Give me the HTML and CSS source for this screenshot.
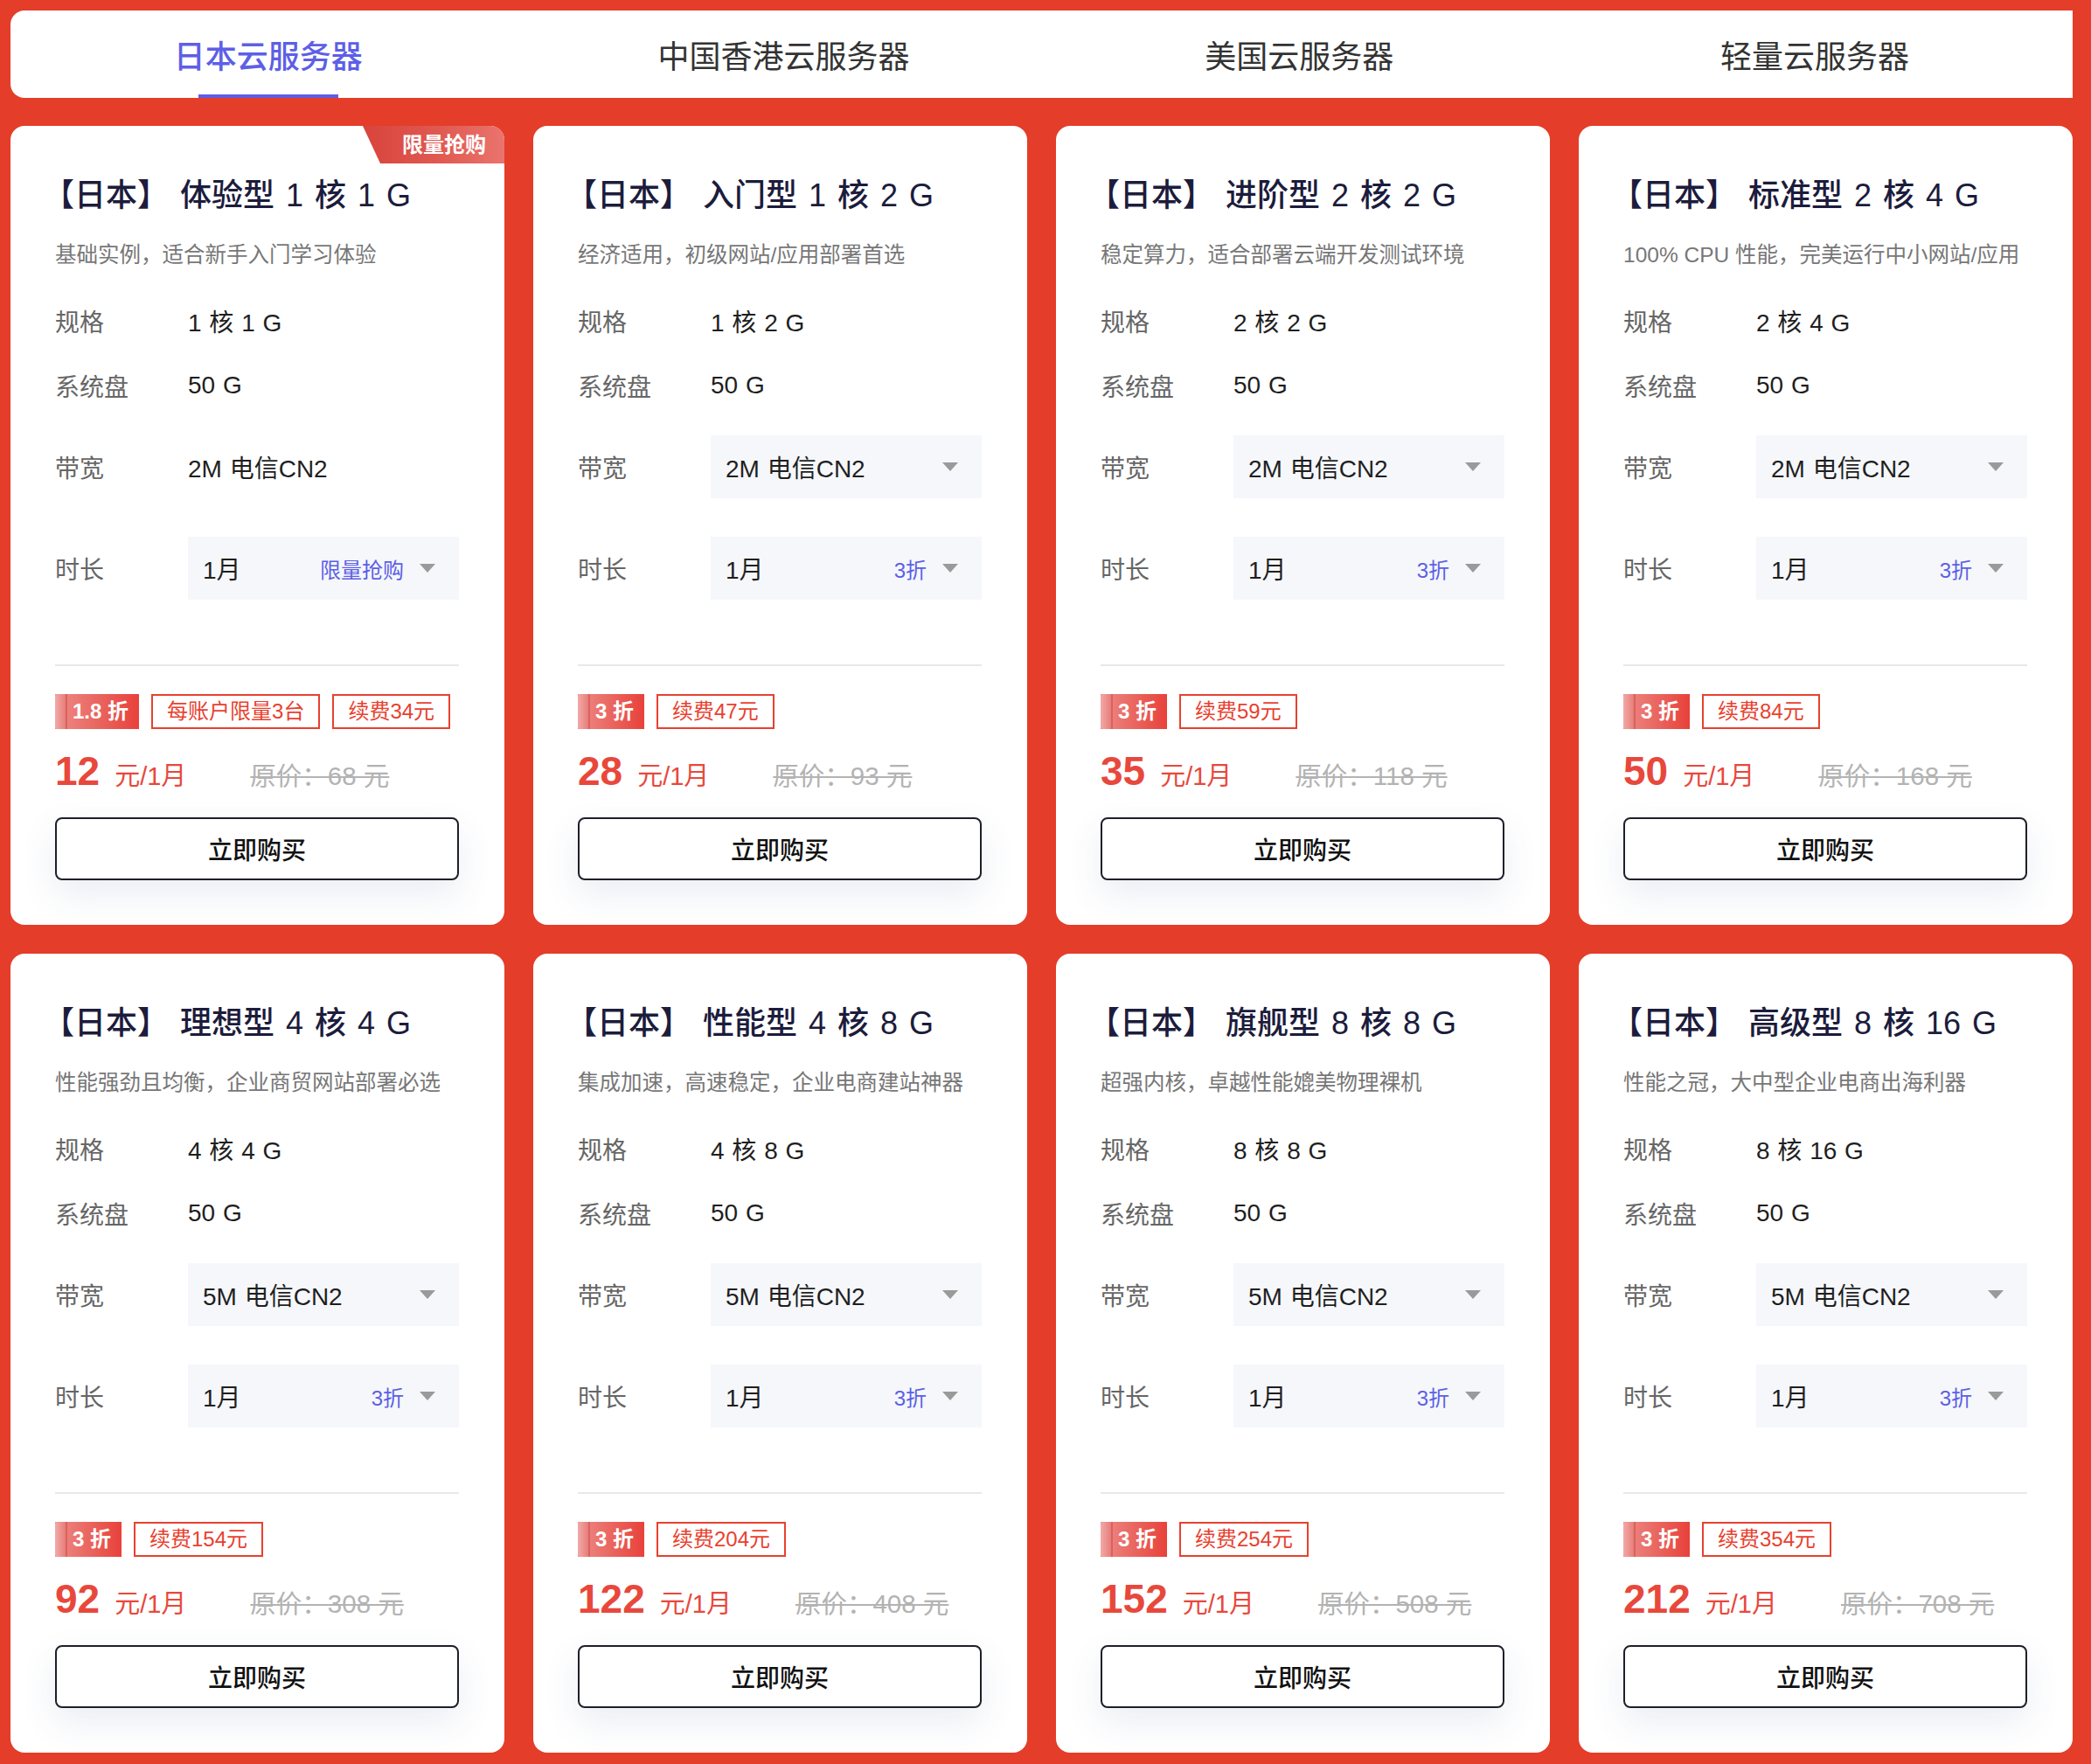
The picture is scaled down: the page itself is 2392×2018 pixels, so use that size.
FILE: index.html
```html
<!DOCTYPE html>
<html lang="zh-CN">
<head>
<meta charset="utf-8">
<title>日本云服务器</title>
<link rel="stylesheet" href="styles.css">
</head>
<body>
<div class="page">
  <nav class="tabs">
    <div class="tab active">日本云服务器</div>
    <div class="tab">中国香港云服务器</div>
    <div class="tab">美国云服务器</div>
    <div class="tab">轻量云服务器</div>
  </nav>

  <div class="grid">
    <!-- card 1 -->
    <div class="card">
      <div class="corner">限量抢购</div>
      <div class="title">【日本】 体验型 1 核 1 G</div>
      <div class="desc">基础实例，适合新手入门学习体验</div>
      <div class="row r-spec"><span class="label">规格</span><span class="value">1 核 1 G</span></div>
      <div class="row r-disk"><span class="label">系统盘</span><span class="value">50 G</span></div>
      <div class="row r-band"><span class="label">带宽</span><span class="value">2M 电信CN2</span></div>
      <div class="row r-time"><span class="label">时长</span><div class="select"><span class="sel-val">1月</span><span class="sel-tip">限量抢购</span><i class="caret"></i></div></div>
      <div class="divider"></div>
      <div class="tags"><span class="disc">1.8 折</span><span class="tag">每账户限量3台</span><span class="tag">续费34元</span></div>
      <div class="price"><span class="num">12</span><span class="unit">元/1月</span><span class="orig">原价：68 元</span></div>
      <button class="buy">立即购买</button>
    </div>

    <!-- card 2 -->
    <div class="card">
      <div class="title">【日本】 入门型 1 核 2 G</div>
      <div class="desc">经济适用，初级网站/应用部署首选</div>
      <div class="row r-spec"><span class="label">规格</span><span class="value">1 核 2 G</span></div>
      <div class="row r-disk"><span class="label">系统盘</span><span class="value">50 G</span></div>
      <div class="row r-band"><span class="label">带宽</span><div class="select"><span class="sel-val">2M 电信CN2</span><i class="caret"></i></div></div>
      <div class="row r-time"><span class="label">时长</span><div class="select"><span class="sel-val">1月</span><span class="sel-tip">3折</span><i class="caret"></i></div></div>
      <div class="divider"></div>
      <div class="tags"><span class="disc">3 折</span><span class="tag">续费47元</span></div>
      <div class="price"><span class="num">28</span><span class="unit">元/1月</span><span class="orig">原价：93 元</span></div>
      <button class="buy">立即购买</button>
    </div>

    <!-- card 3 -->
    <div class="card">
      <div class="title">【日本】 进阶型 2 核 2 G</div>
      <div class="desc">稳定算力，适合部署云端开发测试环境</div>
      <div class="row r-spec"><span class="label">规格</span><span class="value">2 核 2 G</span></div>
      <div class="row r-disk"><span class="label">系统盘</span><span class="value">50 G</span></div>
      <div class="row r-band"><span class="label">带宽</span><div class="select"><span class="sel-val">2M 电信CN2</span><i class="caret"></i></div></div>
      <div class="row r-time"><span class="label">时长</span><div class="select"><span class="sel-val">1月</span><span class="sel-tip">3折</span><i class="caret"></i></div></div>
      <div class="divider"></div>
      <div class="tags"><span class="disc">3 折</span><span class="tag">续费59元</span></div>
      <div class="price"><span class="num">35</span><span class="unit">元/1月</span><span class="orig">原价：118 元</span></div>
      <button class="buy">立即购买</button>
    </div>

    <!-- card 4 -->
    <div class="card">
      <div class="title">【日本】 标准型 2 核 4 G</div>
      <div class="desc">100% CPU 性能，完美运行中小网站/应用</div>
      <div class="row r-spec"><span class="label">规格</span><span class="value">2 核 4 G</span></div>
      <div class="row r-disk"><span class="label">系统盘</span><span class="value">50 G</span></div>
      <div class="row r-band"><span class="label">带宽</span><div class="select"><span class="sel-val">2M 电信CN2</span><i class="caret"></i></div></div>
      <div class="row r-time"><span class="label">时长</span><div class="select"><span class="sel-val">1月</span><span class="sel-tip">3折</span><i class="caret"></i></div></div>
      <div class="divider"></div>
      <div class="tags"><span class="disc">3 折</span><span class="tag">续费84元</span></div>
      <div class="price"><span class="num">50</span><span class="unit">元/1月</span><span class="orig">原价：168 元</span></div>
      <button class="buy">立即购买</button>
    </div>

    <!-- card 5 -->
    <div class="card">
      <div class="title">【日本】 理想型 4 核 4 G</div>
      <div class="desc">性能强劲且均衡，企业商贸网站部署必选</div>
      <div class="row r-spec"><span class="label">规格</span><span class="value">4 核 4 G</span></div>
      <div class="row r-disk"><span class="label">系统盘</span><span class="value">50 G</span></div>
      <div class="row r-band"><span class="label">带宽</span><div class="select"><span class="sel-val">5M 电信CN2</span><i class="caret"></i></div></div>
      <div class="row r-time"><span class="label">时长</span><div class="select"><span class="sel-val">1月</span><span class="sel-tip">3折</span><i class="caret"></i></div></div>
      <div class="divider"></div>
      <div class="tags"><span class="disc">3 折</span><span class="tag">续费154元</span></div>
      <div class="price"><span class="num">92</span><span class="unit">元/1月</span><span class="orig">原价：308 元</span></div>
      <button class="buy">立即购买</button>
    </div>

    <!-- card 6 -->
    <div class="card">
      <div class="title">【日本】 性能型 4 核 8 G</div>
      <div class="desc">集成加速，高速稳定，企业电商建站神器</div>
      <div class="row r-spec"><span class="label">规格</span><span class="value">4 核 8 G</span></div>
      <div class="row r-disk"><span class="label">系统盘</span><span class="value">50 G</span></div>
      <div class="row r-band"><span class="label">带宽</span><div class="select"><span class="sel-val">5M 电信CN2</span><i class="caret"></i></div></div>
      <div class="row r-time"><span class="label">时长</span><div class="select"><span class="sel-val">1月</span><span class="sel-tip">3折</span><i class="caret"></i></div></div>
      <div class="divider"></div>
      <div class="tags"><span class="disc">3 折</span><span class="tag">续费204元</span></div>
      <div class="price"><span class="num">122</span><span class="unit">元/1月</span><span class="orig">原价：408 元</span></div>
      <button class="buy">立即购买</button>
    </div>

    <!-- card 7 -->
    <div class="card">
      <div class="title">【日本】 旗舰型 8 核 8 G</div>
      <div class="desc">超强内核，卓越性能媲美物理裸机</div>
      <div class="row r-spec"><span class="label">规格</span><span class="value">8 核 8 G</span></div>
      <div class="row r-disk"><span class="label">系统盘</span><span class="value">50 G</span></div>
      <div class="row r-band"><span class="label">带宽</span><div class="select"><span class="sel-val">5M 电信CN2</span><i class="caret"></i></div></div>
      <div class="row r-time"><span class="label">时长</span><div class="select"><span class="sel-val">1月</span><span class="sel-tip">3折</span><i class="caret"></i></div></div>
      <div class="divider"></div>
      <div class="tags"><span class="disc">3 折</span><span class="tag">续费254元</span></div>
      <div class="price"><span class="num">152</span><span class="unit">元/1月</span><span class="orig">原价：508 元</span></div>
      <button class="buy">立即购买</button>
    </div>

    <!-- card 8 -->
    <div class="card">
      <div class="title">【日本】 高级型 8 核 16 G</div>
      <div class="desc">性能之冠，大中型企业电商出海利器</div>
      <div class="row r-spec"><span class="label">规格</span><span class="value">8 核 16 G</span></div>
      <div class="row r-disk"><span class="label">系统盘</span><span class="value">50 G</span></div>
      <div class="row r-band"><span class="label">带宽</span><div class="select"><span class="sel-val">5M 电信CN2</span><i class="caret"></i></div></div>
      <div class="row r-time"><span class="label">时长</span><div class="select"><span class="sel-val">1月</span><span class="sel-tip">3折</span><i class="caret"></i></div></div>
      <div class="divider"></div>
      <div class="tags"><span class="disc">3 折</span><span class="tag">续费354元</span></div>
      <div class="price"><span class="num">212</span><span class="unit">元/1月</span><span class="orig">原价：708 元</span></div>
      <button class="buy">立即购买</button>
    </div>
  </div>
</div>
</body>
</html>
```

FILE: styles.css
```css
* { box-sizing: border-box; }

html, body {
  margin: 0;
  padding: 0;
  background: #e43d29;
}

body {
  font-family: "Liberation Sans", "Noto Sans CJK SC", sans-serif;
  color: #1f1f1f;
}

.page {
  padding: 12px 21px 13px 12px;
}

/* ---------- tabs ---------- */
.tabs {
  display: grid;
  grid-template-columns: repeat(4, 1fr);
  height: 100px;
  background: #fff;
  border-radius: 16px 0 0 16px;
  margin-bottom: 32px;
}

.tab {
  position: relative;
  display: flex;
  align-items: center;
  justify-content: center;
  font-size: 36px;
  color: #333;
}

.tab.active {
  color: #5d5fe6;
  font-weight: 500;
}

.tab.active::after {
  content: "";
  position: absolute;
  bottom: 0;
  left: 50%;
  width: 160px;
  height: 4px;
  margin-left: -80px;
  background: #5d5fe6;
}

/* ---------- grid ---------- */
.grid {
  display: grid;
  grid-template-columns: repeat(4, 565px);
  gap: 33px;
}

.card {
  position: relative;
  overflow: hidden;
  background: #fff;
  border-radius: 16px;
  padding: 55px 52px 51px 51px;
  display: flex;
  flex-direction: column;
}

.corner {
  position: absolute;
  top: 0;
  right: 0;
  width: 162px;
  height: 43px;
  padding-left: 45px;
  line-height: 43px;
  font-size: 24px;
  font-weight: 700;
  color: #fff;
  background: linear-gradient(90deg, #d8443c 0%, #e05a52 55%, #ea746e 100%);
  clip-path: polygon(0 0, 100% 0, 100% 100%, 20px 100%);
}

.title {
  height: 50px;
  line-height: 50px;
  font-size: 36px;
  font-weight: 500;
  color: #1c1c3c;
  margin-left: -14px;
  word-spacing: 3px;
  white-space: nowrap;
}

.desc {
  margin-top: 26px;
  height: 34px;
  line-height: 34px;
  font-size: 24.5px;
  color: #777;
  white-space: nowrap;
}

.row {
  display: flex;
  align-items: center;
  font-size: 28px;
}

.label {
  width: 152px;
  flex: none;
  color: #666;
}

.value {
  color: #1f1f1f;
  word-spacing: 1px;
}

.r-spec { margin-top: 38px; height: 40px; }
.r-disk { margin-top: 34px; height: 40px; }
.r-band { margin-top: 37px; height: 72px; }
.r-time { margin-top: 44px; height: 72px; }

.select {
  flex: 1;
  height: 72px;
  display: flex;
  align-items: center;
  padding: 0 27px 0 17px;
  background: #f5f7fb;
}

.sel-val {
  color: #1f1f1f;
  font-size: 28px;
  word-spacing: 1px;
}

.sel-tip {
  margin-left: auto;
  font-size: 24px;
  color: #5d5fe6;
}

.caret {
  width: 0;
  height: 0;
  margin-left: 18px;
  border-left: 9px solid transparent;
  border-right: 9px solid transparent;
  border-top: 10px solid #9a9a9a;
}

.select .sel-val + .caret { margin-left: auto; }

.divider {
  margin-top: 74px;
  height: 2px;
  background: #e8e8e8;
}

/* ---------- tags ---------- */
.tags {
  margin-top: 32px;
  height: 40px;
  display: flex;
  gap: 14px;
}

.disc {
  position: relative;
  height: 40px;
  line-height: 40px;
  padding: 0 12px 0 20px;
  font-size: 24px;
  font-weight: 700;
  color: #fff;
  background: linear-gradient(90deg, #ee8b88 0%, #ea6a64 45%, #e8413a 100%);
}

.disc::before {
  content: "";
  position: absolute;
  left: 0;
  top: 0;
  bottom: 0;
  width: 12px;
  border-radius: 3px 0 0 3px;
  background: linear-gradient(90deg, #f2aaa8, #e77d79);
  border-right: 2px solid #d9625e;
}

.tag {
  height: 40px;
  line-height: 36px;
  padding: 0 16px;
  border: 2px solid #e8412f;
  font-size: 24px;
  color: #e8412f;
}

/* ---------- price ---------- */
.price {
  margin-top: 20px;
  height: 56px;
  display: flex;
  align-items: baseline;
  white-space: nowrap;
}

.num {
  font-size: 46px;
  line-height: 56px;
  font-weight: 700;
  color: #e8483c;
}

.unit {
  margin-left: 17px;
  font-size: 29px;
  color: #e8483c;
}

.orig {
  margin-left: 73px;
  font-size: 29.5px;
  color: #b3b3b3;
  text-decoration: line-through;
}

/* ---------- button ---------- */
.buy {
  margin-top: 25px;
  height: 72px;
  width: 100%;
  background: #fff;
  border: 2px solid #1f1f2a;
  border-radius: 8px;
  font-family: "Liberation Sans", "Noto Sans CJK SC", sans-serif;
  font-size: 28px;
  font-weight: 500;
  color: #111;
  box-shadow: 0 16px 40px rgba(60, 80, 140, 0.10);
  cursor: pointer;
}
```
